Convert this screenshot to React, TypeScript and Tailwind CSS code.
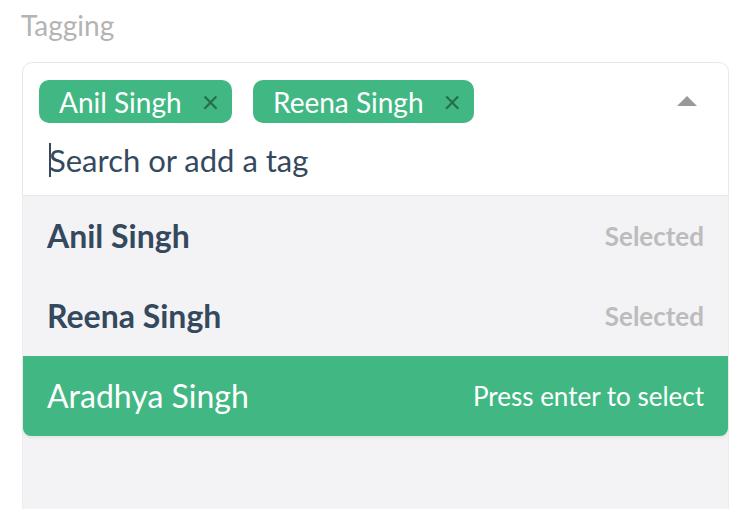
import React from 'react';

const tags = ['Anil Singh', 'Reena Singh'];

const options = [
  { name: 'Anil Singh', selected: true },
  { name: 'Reena Singh', selected: true },
  { name: 'Aradhya Singh', selected: false, highlight: true },
];

export default function App() {
  return (
    <div className="w-[755px] h-[524px] bg-white font-['Lato',sans-serif] overflow-hidden">
      <div className="pt-[6px] pl-[21px] text-[28px] leading-[38px] text-[#b4b4b4]">Tagging</div>

      <div className="mt-[18px] ml-[22px] w-[707px]">
        {/* select box */}
        <div className="relative border border-[#e8e8e8] rounded-t-[10px] bg-white pt-[17px] pl-[16px] pr-[80px]">
          <div className="flex gap-[21px]">
            {tags.map((t) => (
              <span
                key={t}
                className="flex items-center h-[43px] rounded-[10px] bg-[#41b883] text-white text-[28px] pl-[20px] pr-[13px]"
              >
                <span className="leading-none">{t}</span>
                <span className="ml-[20px] text-[#266d4d] text-[30px] leading-none -mt-[2px]">×</span>
              </span>
            ))}
          </div>
          <div className="flex items-center h-[44px] mt-[15px] mb-[13px] pl-[10px] text-[31px] text-[#35495e]">
            <span className="w-[2px] h-[34px] bg-[#35495e] -mr-[2px]" />
            <span className="leading-none">Search or add a tag</span>
          </div>
          {/* caret */}
          <div className="absolute top-[33px] right-[31px] w-0 h-0 border-l-[10px] border-r-[10px] border-b-[10px] border-l-transparent border-r-transparent border-b-[#999]" />
        </div>

        {/* dropdown */}
        <div className="h-[313px] bg-[#f3f3f5] border-x border-[#ededed]">
          {options.map((o) => (
            <div
              key={o.name}
              className={
                o.highlight
                  ? 'flex items-center justify-between h-[80px] px-[24px] bg-[#41b883] text-white rounded-b-[8px] shadow-[0_2px_3px_rgba(0,0,0,0.06)]'
                  : 'flex items-center justify-between h-[80px] px-[24px] text-[#35495e]'
              }
            >
              <span className={o.highlight ? 'text-[32px]' : 'text-[32px] font-bold'}>{o.name}</span>
              <span
                className={
                  o.highlight ? 'text-[26px] text-white' : 'text-[26px] font-bold text-[#bcbcbc]'
                }
              >
                {o.selected ? 'Selected' : 'Press enter to select'}
              </span>
            </div>
          ))}
        </div>
      </div>
    </div>
  );
}
